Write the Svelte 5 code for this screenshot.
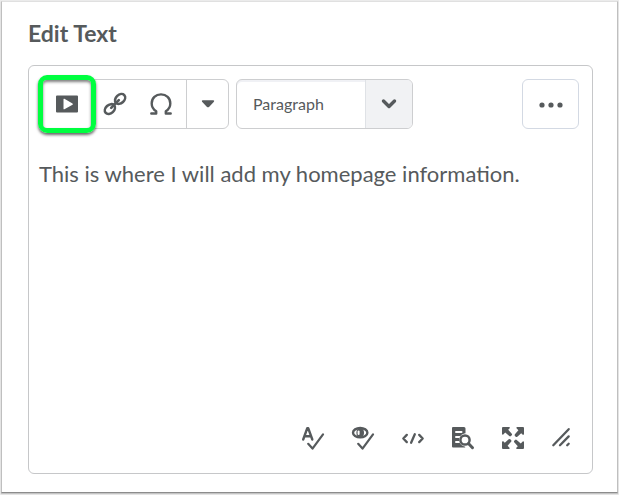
<script lang="ts">
    let content = "This is where I will add my homepage information.";
    let format = "Paragraph";

    const formats = ["Paragraph", "Heading 1", "Heading 2", "Heading 3", "Preformatted"];
</script>

<main>
    <form class="panel">
        <label class="title" for="content">Edit Text</label>

        <div class="editor">
            <div class="toolbar" role="toolbar" aria-label="Formatting">
                <div class="group">
                    <button type="button" class="insert highlight" title="Insert Stuff">
                        <svg width="22" height="22" viewBox="0 0 22 22">
                            <path
                                fill-rule="evenodd"
                                d="M1 2.5h20a1 1 0 0 1 1 1v15a1 1 0 0 1-1 1H1a1 1 0 0 1-1-1v-15a1 1 0 0 1 1-1zM7.5 6.2v9.6q0 .8.9.4l8.1-4.5q.9-.7 0-1.3L8.4 5.8q-.9-.4-.9.4z"
                            />
                        </svg>
                    </button>
                    <button type="button" class="link" title="Insert Quicklink">
                        <svg class="line" width="24" height="24" viewBox="0 0 24 24">
                            <g stroke-width="2.6">
                                <ellipse cx="17.1" cy="6.9" rx="5.7" ry="4.2" transform="rotate(-43 17.1 6.9)" />
                                <ellipse cx="6.9" cy="17.1" rx="5.7" ry="4.2" transform="rotate(-43 6.9 17.1)" />
                                <path d="M8.2 15.8l7.6-7.6" />
                            </g>
                        </svg>
                    </button>
                    <button type="button" class="symbol" title="Symbol">
                        <svg class="line" width="22" height="22" viewBox="0 0 22 22">
                            <path
                                stroke-width="2.4"
                                d="M1.3 20.5h4.9v-2.2C3.4 16.5 1.7 14 1.7 10.5 1.7 5 5.7 1.4 11 1.4s9.3 3.6 9.3 9.1c0 3.5-1.7 6-4.5 7.8v2.2h4.9"
                            />
                        </svg>
                    </button>
                    <button type="button" class="more-insert" title="More insert options">
                        <svg width="14" height="8" viewBox="0 0 14 8">
                            <path d="M1.6.2h10.8q1.3.4.5 1.5L8 6.9q-1 .8-2 0L1.1 1.7Q.3.6 1.6.2z" />
                        </svg>
                    </button>
                </div>

                <div class="format">
                    <select aria-label="Format" bind:value={format}>
                        {#each formats as name}
                            <option>{name}</option>
                        {/each}
                    </select>
                    <span class="arrow">
                        <svg class="line" width="16" height="12" viewBox="0 0 16 12">
                            <path stroke-width="3.4" d="M2.5 3L8 8.5 13.5 3" />
                        </svg>
                    </span>
                </div>

                <button type="button" class="more" title="More actions">
                    <svg width="24" height="6" viewBox="0 0 24 6">
                        <circle cx="3" cy="3" r="2.6" />
                        <circle cx="12" cy="3" r="2.6" />
                        <circle cx="21" cy="3" r="2.6" />
                    </svg>
                </button>
            </div>

            <textarea id="content" spellcheck="false" bind:value={content}></textarea>

            <div class="footer">
                <button type="button" title="Check Spelling">
                    <svg class="line" width="24" height="24" viewBox="0 0 24 24">
                        <path stroke-width="2.4" d="M2.2 13.5L6.2 2.3h1.1l4 11.2M3.8 10.3h6" />
                        <path stroke-width="2.2" d="M7.2 17.8l4.3 4.8L22 8.3" />
                    </svg>
                </button>
                <button type="button" title="Check Accessibility">
                    <svg class="line" width="24" height="24" viewBox="0 0 24 24">
                        <ellipse stroke-width="2.4" cx="9.2" cy="6.7" rx="7.2" ry="4.7" />
                        <ellipse class="solid" cx="9.2" cy="6.7" rx="3.8" ry="4.4" />
                        <path class="glint" d="M7.6 5.5v2.4" />
                        <path stroke-width="2.2" d="M7.2 17.8l4.3 4.8L22 8.3" />
                    </svg>
                </button>
                <button type="button" title="HTML Source Editor">
                    <svg class="line" width="24" height="24" viewBox="0 0 24 24">
                        <path stroke-width="2.3" d="M5.8 8.9L2.3 12.5l3.5 3.6M18.2 8.9l3.5 3.6-3.5 3.6M13.8 8.2l-3.7 8.6" />
                    </svg>
                </button>
                <button type="button" title="Preview">
                    <svg class="line" width="24" height="24" viewBox="0 0 24 24">
                        <path
                            class="solid"
                            d="M2 1h11q1.5 0 1.5 1.5v4.8C11 7.6 8.2 10.2 8.2 14s2.5 6 6 6.7v.8H2q-1 0-1-1V2q0-1 1-1z"
                        />
                        <path class="glint" d="M5 6h5.5M5 11h3.5M5 16h3" />
                        <circle class="lens" cx="14" cy="14" r="4.6" />
                        <path stroke-width="3" d="M17.7 17.7l3.8 4" />
                    </svg>
                </button>
                <button type="button" title="Toggle Fullscreen">
                    <svg width="24" height="24" viewBox="0 0 24 24">
                        {#each [0, 90, 180, 270] as angle}
                            <path
                                transform="rotate({angle} 12 12)"
                                d="M2 1h6.2q1 .5.5 1.3L7.2 3.8l3.6 3.9q.6.8 0 1.5l-.9.9q-.8.6-1.6 0L4.2 6.6 2.3 8.5Q1.3 9 1 8V2q0-1 1-1z"
                            />
                        {/each}
                    </svg>
                </button>
                <button type="button" title="Resize">
                    <svg class="line" width="24" height="24" viewBox="0 0 24 24">
                        <path stroke-width="2.3" d="M2.3 19.2L17.7 3.2M9 19.2l8.7-8.8M16.2 19.2l1.5-1.5" />
                    </svg>
                </button>
            </div>
        </div>
    </form>
</main>

<style>
    :global(body) {
        margin: 0;
        background: #ebebeb;
    }

    main {
        display: flex;
        box-sizing: border-box;
        min-height: 100vh;
        padding: 1px 1px 2px;
        color: #565a5c;
        font-family: Lato, "Liberation Sans", sans-serif;
    }

    .panel {
        display: flex;
        flex: 1;
        flex-direction: column;
        min-width: 0;
        padding: 17px 24px 18px 26px;
        border: 1px solid #bfbfbf;
        border-top-color: #e0e0e0;
        border-bottom-color: #8c8c8c;
        background: #fff;
        box-shadow: 0 1px 1px #c4c4c4;
    }

    .title {
        margin-bottom: 18px;
        font-size: 23px;
        font-weight: 700;
        line-height: 28px;
    }

    .editor {
        display: flex;
        flex: 1;
        flex-direction: column;
        border: 1px solid #c6c7c9;
        border-radius: 6px;
    }

    .toolbar {
        display: flex;
        gap: 7px;
        padding: 13px 13px 0 10px;
    }

    .group {
        display: flex;
        box-sizing: border-box;
        height: 50px;
        border: 1px solid #cdced0;
        border-radius: 6px;
    }

    button {
        display: flex;
        align-items: center;
        justify-content: center;
        padding: 0;
        border: 0;
        background: none;
        color: inherit;
        cursor: pointer;
    }

    .insert {
        width: 54px;
    }

    .link {
        width: 42px;
    }

    .symbol {
        width: 50px;
    }

    .more-insert {
        box-sizing: border-box;
        width: 42px;
        border-left: 1px solid #cdced0;
    }

    .highlight {
        position: relative;
    }

    .highlight::after {
        position: absolute;
        inset: -5px -2px -5px -2px;
        border: 5px solid #00ff40;
        border-radius: 9px;
        box-shadow: 0 2px 3px rgba(0, 0, 0, 0.6), inset 0 2px 3px rgba(0, 0, 0, 0.5);
        content: "";
    }

    .format {
        display: grid;
        grid-template-columns: 1fr 47px;
        box-sizing: border-box;
        width: 177px;
        height: 50px;
        overflow: hidden;
        border: 1px solid #cdced0;
        border-radius: 6px;
        box-shadow: inset 0 2px 0 #f0f1f5;
    }

    select {
        grid-area: 1 / 1 / 2 / 3;
        padding: 0 48px 2px 16px;
        border: 0;
        appearance: none;
        background: none;
        color: inherit;
        font: 16px Lato, "Liberation Sans", sans-serif;
    }

    .arrow {
        display: flex;
        grid-area: 1 / 2;
        align-items: center;
        justify-content: center;
        border-left: 1px solid #dfe2e6;
        background: #f1f2f4;
        pointer-events: none;
    }

    .more {
        width: 57px;
        height: 50px;
        margin-left: auto;
        padding-top: 2px;
        border: 1px solid #d3d9e3;
        border-radius: 6px;
    }

    textarea {
        flex: 1;
        min-height: 100px;
        padding: 30px 10px 0;
        border: 0;
        outline: 0;
        resize: none;
        background: none;
        color: inherit;
        font: 22px/30px Lato, "Liberation Sans", sans-serif;
    }

    .footer {
        display: flex;
        justify-content: flex-end;
        padding: 0 4px 11px;
    }

    .footer button {
        width: 50px;
        height: 48px;
    }

    svg {
        fill: currentColor;
    }

    .line {
        fill: none;
        stroke: currentColor;
        stroke-linecap: round;
        stroke-linejoin: round;
    }

    .solid {
        fill: currentColor;
        stroke: none;
    }

    .glint {
        stroke: #fff;
        stroke-width: 2;
    }

    .lens {
        fill: #fff;
        stroke-width: 2.5;
    }
</style>
